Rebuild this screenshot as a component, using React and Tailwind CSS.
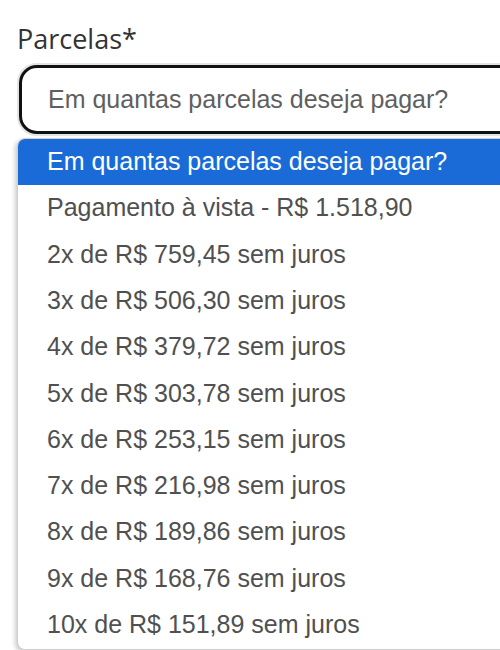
import React from "react";

const options = [
  "Pagamento à vista - R$ 1.518,90",
  "2x de R$ 759,45 sem juros",
  "3x de R$ 506,30 sem juros",
  "4x de R$ 379,72 sem juros",
  "5x de R$ 303,78 sem juros",
  "6x de R$ 253,15 sem juros",
  "7x de R$ 216,98 sem juros",
  "8x de R$ 189,86 sem juros",
  "9x de R$ 168,76 sem juros",
  "10x de R$ 151,89 sem juros",
];

const arial = { fontFamily: '"Liberation Sans", Arial, sans-serif' };

export default function App() {
  return (
    <div className="w-[500px] h-[650px] bg-white overflow-hidden">
      <div className="pt-[24px] pl-[17px]">
        <div
          className="text-[27px] leading-[30px] text-[#333]"
          style={{ fontFamily: '"Open Sans", sans-serif' }}
        >
          Parcelas*
        </div>
        <div className="mt-[9px] w-[520px] h-[73px] rounded-[20px] border-[2px] border-[#e2e4e4] bg-white">
          <div className="h-full rounded-[18px] border-[3px] border-[#111] flex items-center pl-[26px]">
            <span className="text-[25px] text-[#5f5f5f]" style={arial}>
              Em quantas parcelas deseja pagar?
            </span>
          </div>
        </div>
        <div
          className="mt-[2px] w-[520px] rounded-[8px] border border-[#cfcfcf] bg-white overflow-hidden shadow-[-2px_2px_4px_rgba(0,0,0,0.2)]"
          style={arial}
        >
          <div className="h-[46px] bg-[#1a6bd7] flex items-center pl-[29px] text-[25px] text-white">
            Em quantas parcelas deseja pagar?
          </div>
          {options.map((o) => (
            <div
              key={o}
              className="h-[46.3px] flex items-center pl-[29px] text-[25px] text-[#505050]"
            >
              {o}
            </div>
          ))}
          <div className="h-[1px]" />
        </div>
      </div>
    </div>
  );
}
